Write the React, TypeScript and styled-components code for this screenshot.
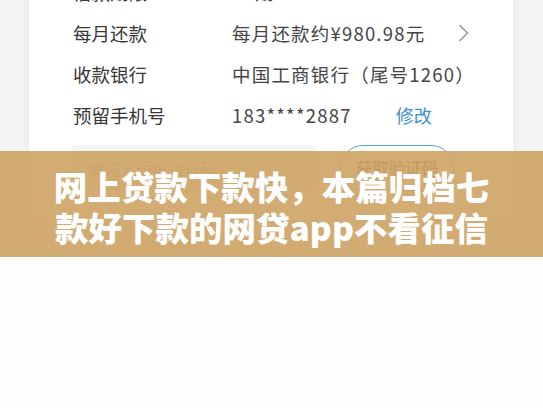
import React from 'react';
import styled, { createGlobalStyle } from 'styled-components';

const GlobalStyle = createGlobalStyle`
  html, body {
    margin: 0;
    padding: 0;
    background: #fdfdfd;
  }
  body {
    font-family: 'Noto Sans CJK SC', 'Noto Sans', sans-serif;
  }
`;

interface Row {
  label: string;
  value: string;
  action?: 'chevron' | 'edit';
}

const rows: Row[] = [
  { label: '借款期限', value: '12期' },
  { label: '每月还款', value: '每月还款约¥980.98元', action: 'chevron' },
  { label: '收款银行', value: '中国工商银行（尾号1260）' },
  { label: '预留手机号', value: '183****2887', action: 'edit' },
];

const Chevron = () => (
  <svg width='12' height='18' viewBox='0 0 12 18' fill='none'>
    <path
      d='M2 1.5 L9.5 9 L2 16.5'
      stroke='#9a9a9a'
      strokeWidth='1.6'
      strokeLinecap='round'
      strokeLinejoin='round'
    />
  </svg>
);

const App: React.FC = () => {
  return (
    <Page>
      <GlobalStyle />
      <Screen>
        <Card>
          {rows.map((row) => (
            <InfoRow key={row.label}>
              <Label>{row.label}</Label>
              <Value>
                {row.value}
                {row.action === 'edit' && <EditLink>修改</EditLink>}
              </Value>
              {row.action === 'chevron' && (
                <ChevronBox>
                  <Chevron />
                </ChevronBox>
              )}
            </InfoRow>
          ))}
          <CodeRow>
            <CodeInput>请输入短信验证码</CodeInput>
            <CodeButton>获取验证码</CodeButton>
          </CodeRow>
        </Card>
        <Banner>
          <BannerTitle>
            网上贷款下款快，本篇归档七
            <br />
            款好下款的网贷app不看征信
          </BannerTitle>
        </Banner>
      </Screen>
    </Page>
  );
};

export default App;

const Page = styled.div`
  width: 543px;
  height: 408px;
  overflow: hidden;
  background: #fdfdfd;
`;

const Screen = styled.div`
  position: relative;
  height: 257px;
  overflow: hidden;
  background: #f4f4f4;
  padding: 0 30px 0 29px;
`;

const Card = styled.div`
  margin-top: -29px;
  background: #ffffff;
  box-shadow: 0 0 12px rgba(0, 0, 0, 0.06);
  padding: 0 0 29px;
`;

const InfoRow = styled.div`
  display: flex;
  align-items: center;
  height: 41px;
  padding: 0 43px 0 44px;
`;

const Label = styled.div`
  width: 159px;
  flex-shrink: 0;
  font-size: 18.5px;
  color: #383838;
  white-space: nowrap;
`;

const Value = styled.div`
  flex: 1;
  display: flex;
  align-items: center;
  font-size: 18.5px;
  letter-spacing: 1.2px;
  color: #454545;
  white-space: nowrap;
`;

const EditLink = styled.span`
  margin-left: 44px;
  font-size: 18px;
  letter-spacing: 0;
  color: #3d8fcd;
`;

const ChevronBox = styled.div`
  display: flex;
  align-items: center;
`;

const CodeRow = styled.div`
  display: flex;
  align-items: center;
  gap: 24px;
  margin-top: 10px;
  padding: 0 0 0 43px;
`;

const CodeInput = styled.div`
  width: 244px;
  height: 46px;
  box-sizing: border-box;
  padding-left: 16px;
  display: flex;
  align-items: center;
  background: #f5f5f5;
  border-radius: 4px;
  font-size: 16px;
  color: #a8a8a8;
`;

const CodeButton = styled.div`
  width: 114px;
  height: 46px;
  box-sizing: border-box;
  display: flex;
  align-items: center;
  justify-content: center;
  border: 1.5px solid #4ea4da;
  border-radius: 23px;
  font-size: 16.5px;
  color: #3a3a3a;
`;

const Banner = styled.div`
  position: absolute;
  left: 0;
  right: 0;
  bottom: 0;
  height: 106px;
  display: flex;
  align-items: center;
  justify-content: center;
  background: rgba(206, 163, 101, 0.9);
`;

const BannerTitle = styled.div`
  font-size: 33.5px;
  line-height: 41px;
  font-weight: 900;
  color: #ffffff;
  text-align: center;
  white-space: nowrap;
  margin-top: 4px;
`;
